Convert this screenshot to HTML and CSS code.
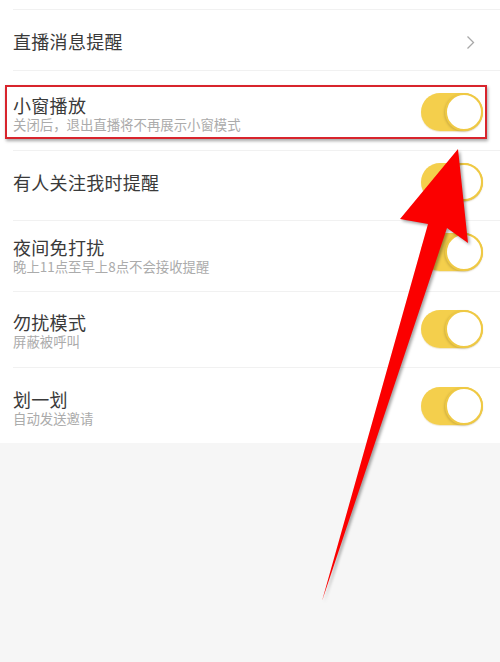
FILE: index.html
```html
<!DOCTYPE html>
<html lang="zh-CN">
<head>
<meta charset="utf-8">
<title>设置</title>
<link rel="stylesheet" href="styles.css">
</head>
<body>
<div class="page">
  <div class="list">
    <div class="top-gap"></div>
    <div class="row row-nav">
      <div class="texts"><div class="title">直播消息提醒</div></div>
      <svg class="chev" width="9" height="15" viewBox="0 0 9 15"><path d="M1.5 1.5 L7.5 7.5 L1.5 13.5" fill="none" stroke="#a8a8a8" stroke-width="1.3"/></svg>
    </div>
    <div class="row row-2">
      <div class="texts"><div class="title">小窗播放</div><div class="sub">关闭后，退出直播将不再展示小窗模式</div></div>
      <div class="toggle"><div class="knob"></div></div>
    </div>
    <div class="row row-3">
      <div class="texts"><div class="title">有人关注我时提醒</div></div>
      <div class="toggle"><div class="knob"></div></div>
    </div>
    <div class="row row-4">
      <div class="texts"><div class="title">夜间免打扰</div><div class="sub">晚上11点至早上8点不会接收提醒</div></div>
      <div class="toggle"><div class="knob"></div></div>
    </div>
    <div class="row row-5">
      <div class="texts"><div class="title">勿扰模式</div><div class="sub">屏蔽被呼叫</div></div>
      <div class="toggle"><div class="knob"></div></div>
    </div>
    <div class="row row-6 last">
      <div class="texts"><div class="title">划一划</div><div class="sub">自动发送邀请</div></div>
      <div class="toggle"><div class="knob"></div></div>
    </div>
  </div>
  <div class="highlight"></div>
  <svg class="arrow" width="500" height="662" viewBox="0 0 500 662">
    <polygon points="458,149 468,243 447,228 322,601 428,224 400,219" fill="#fb0000"/>
  </svg>
</div>
</body>
</html>
```

FILE: styles.css
```css
html, body {
  margin: 0;
  padding: 0;
}
body {
  background: #f6f6f6;
  font-family: "Noto Sans CJK SC", "Noto Sans", sans-serif;
  width: 500px;
  height: 662px;
  overflow: hidden;
}
.page {
  position: relative;
  width: 500px;
  height: 662px;
}
.list {
  background: #ffffff;
  padding-left: 13px;
}
.top-gap {
  height: 9px;
  border-bottom: 1px solid #f1f1f1;
}
.row {
  display: flex;
  align-items: flex-start;
  justify-content: space-between;
  padding-right: 17px;
  border-bottom: 1px solid #f1f1f1;
  box-sizing: border-box;
}
.row.last {
  border-bottom: none;
}
.row-nav { height: 61px; padding-right: 25px; }
.row-2 { height: 80px; }
.row-3 { height: 70px; }
.row-4 { height: 71px; }
.row-5 { height: 76px; }
.row-6 { height: 75px; }

.row-nav .texts { margin-top: 21px; }
.row-nav .chev { margin-top: 25px; }
.row-2 .texts { margin-top: 24px; }
.row-2 .toggle { margin-top: 22px; }
.row-3 .texts { margin-top: 21px; }
.row-3 .toggle { margin-top: 12px; }
.row-4 .texts { margin-top: 16px; }
.row-4 .toggle { margin-top: 12px; }
.row-5 .texts { margin-top: 20px; }
.row-5 .toggle { margin-top: 18px; }
.row-6 .texts { margin-top: 21px; }
.row-6 .toggle { margin-top: 19px; }

.texts {
  display: flex;
  flex-direction: column;
}
.title {
  font-size: 18px;
  letter-spacing: 0.3px;
  line-height: 20px;
  color: #3a3a3a;
}
.sub {
  font-size: 13.4px;
  line-height: 17px;
  color: #ababab;
  margin-top: 1px;
}
.chev {
  display: block;
}
.toggle {
  width: 62px;
  height: 38px;
  border-radius: 19px;
  background: #f4cf4c;
  display: flex;
  justify-content: flex-end;
  box-shadow: 0 1px 1px rgba(190, 150, 40, 0.25);
}
.knob {
  width: 34px;
  height: 34px;
  border-radius: 50%;
  background: #ffffff;
  border: 2px solid #efc944;
  box-shadow: -1px 1px 2px rgba(120, 100, 40, 0.25);
}
.highlight {
  position: absolute;
  left: 5px;
  top: 85px;
  width: 478px;
  height: 50px;
  border: 2px solid #d8242c;
  box-shadow: 1px 2px 3px rgba(0, 0, 0, 0.35);
}
.arrow {
  position: absolute;
  left: 0;
  top: 0;
  filter: drop-shadow(2px 2px 1.5px rgba(0, 0, 0, 0.35));
}
```
